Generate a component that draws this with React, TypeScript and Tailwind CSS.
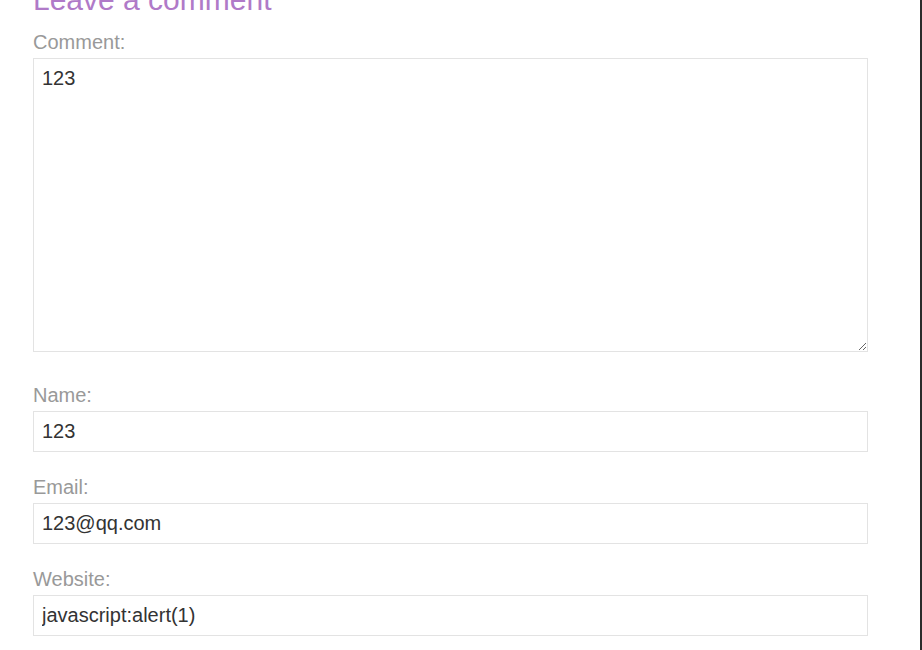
import React from 'react';

const fieldClass =
  'block w-[835px] border border-[#e3e3e3] bg-white px-2 py-2 text-[20px] leading-[23px] text-[#333] outline-none';

function Field({ label, value }: { label: string; value: string }) {
  return (
    <div className="mb-[24px]">
      <label className="mb-[4px] block text-[20px] leading-[23px] text-[#999]">{label}</label>
      <input className={fieldClass + ' h-[41px]'} defaultValue={value} readOnly />
    </div>
  );
}

export default function App() {
  return (
    <div
      className="h-[650px] w-[922px] overflow-hidden border-r-2 border-[#2b2b2b] bg-white"
      style={{ fontFamily: '"Liberation Sans", Arial, sans-serif' }}
    >
      <div className="pl-[33px]">
        <h2 className="-mt-[17px] mb-[14px] text-[30px] leading-[34px] text-[#b07ac8]">Leave a comment</h2>

        {/* Comment */}
        <div className="mb-[32px]">
          <label className="mb-[4px] block text-[20px] leading-[23px] text-[#999]">Comment:</label>
          <textarea className={fieldClass + ' h-[294px] resize-y'} defaultValue="123" readOnly />
        </div>

        <Field label="Name:" value="123" />
        <Field label="Email:" value="123@qq.com" />
        <Field label="Website:" value="javascript:alert(1)" />
      </div>
    </div>
  );
}
